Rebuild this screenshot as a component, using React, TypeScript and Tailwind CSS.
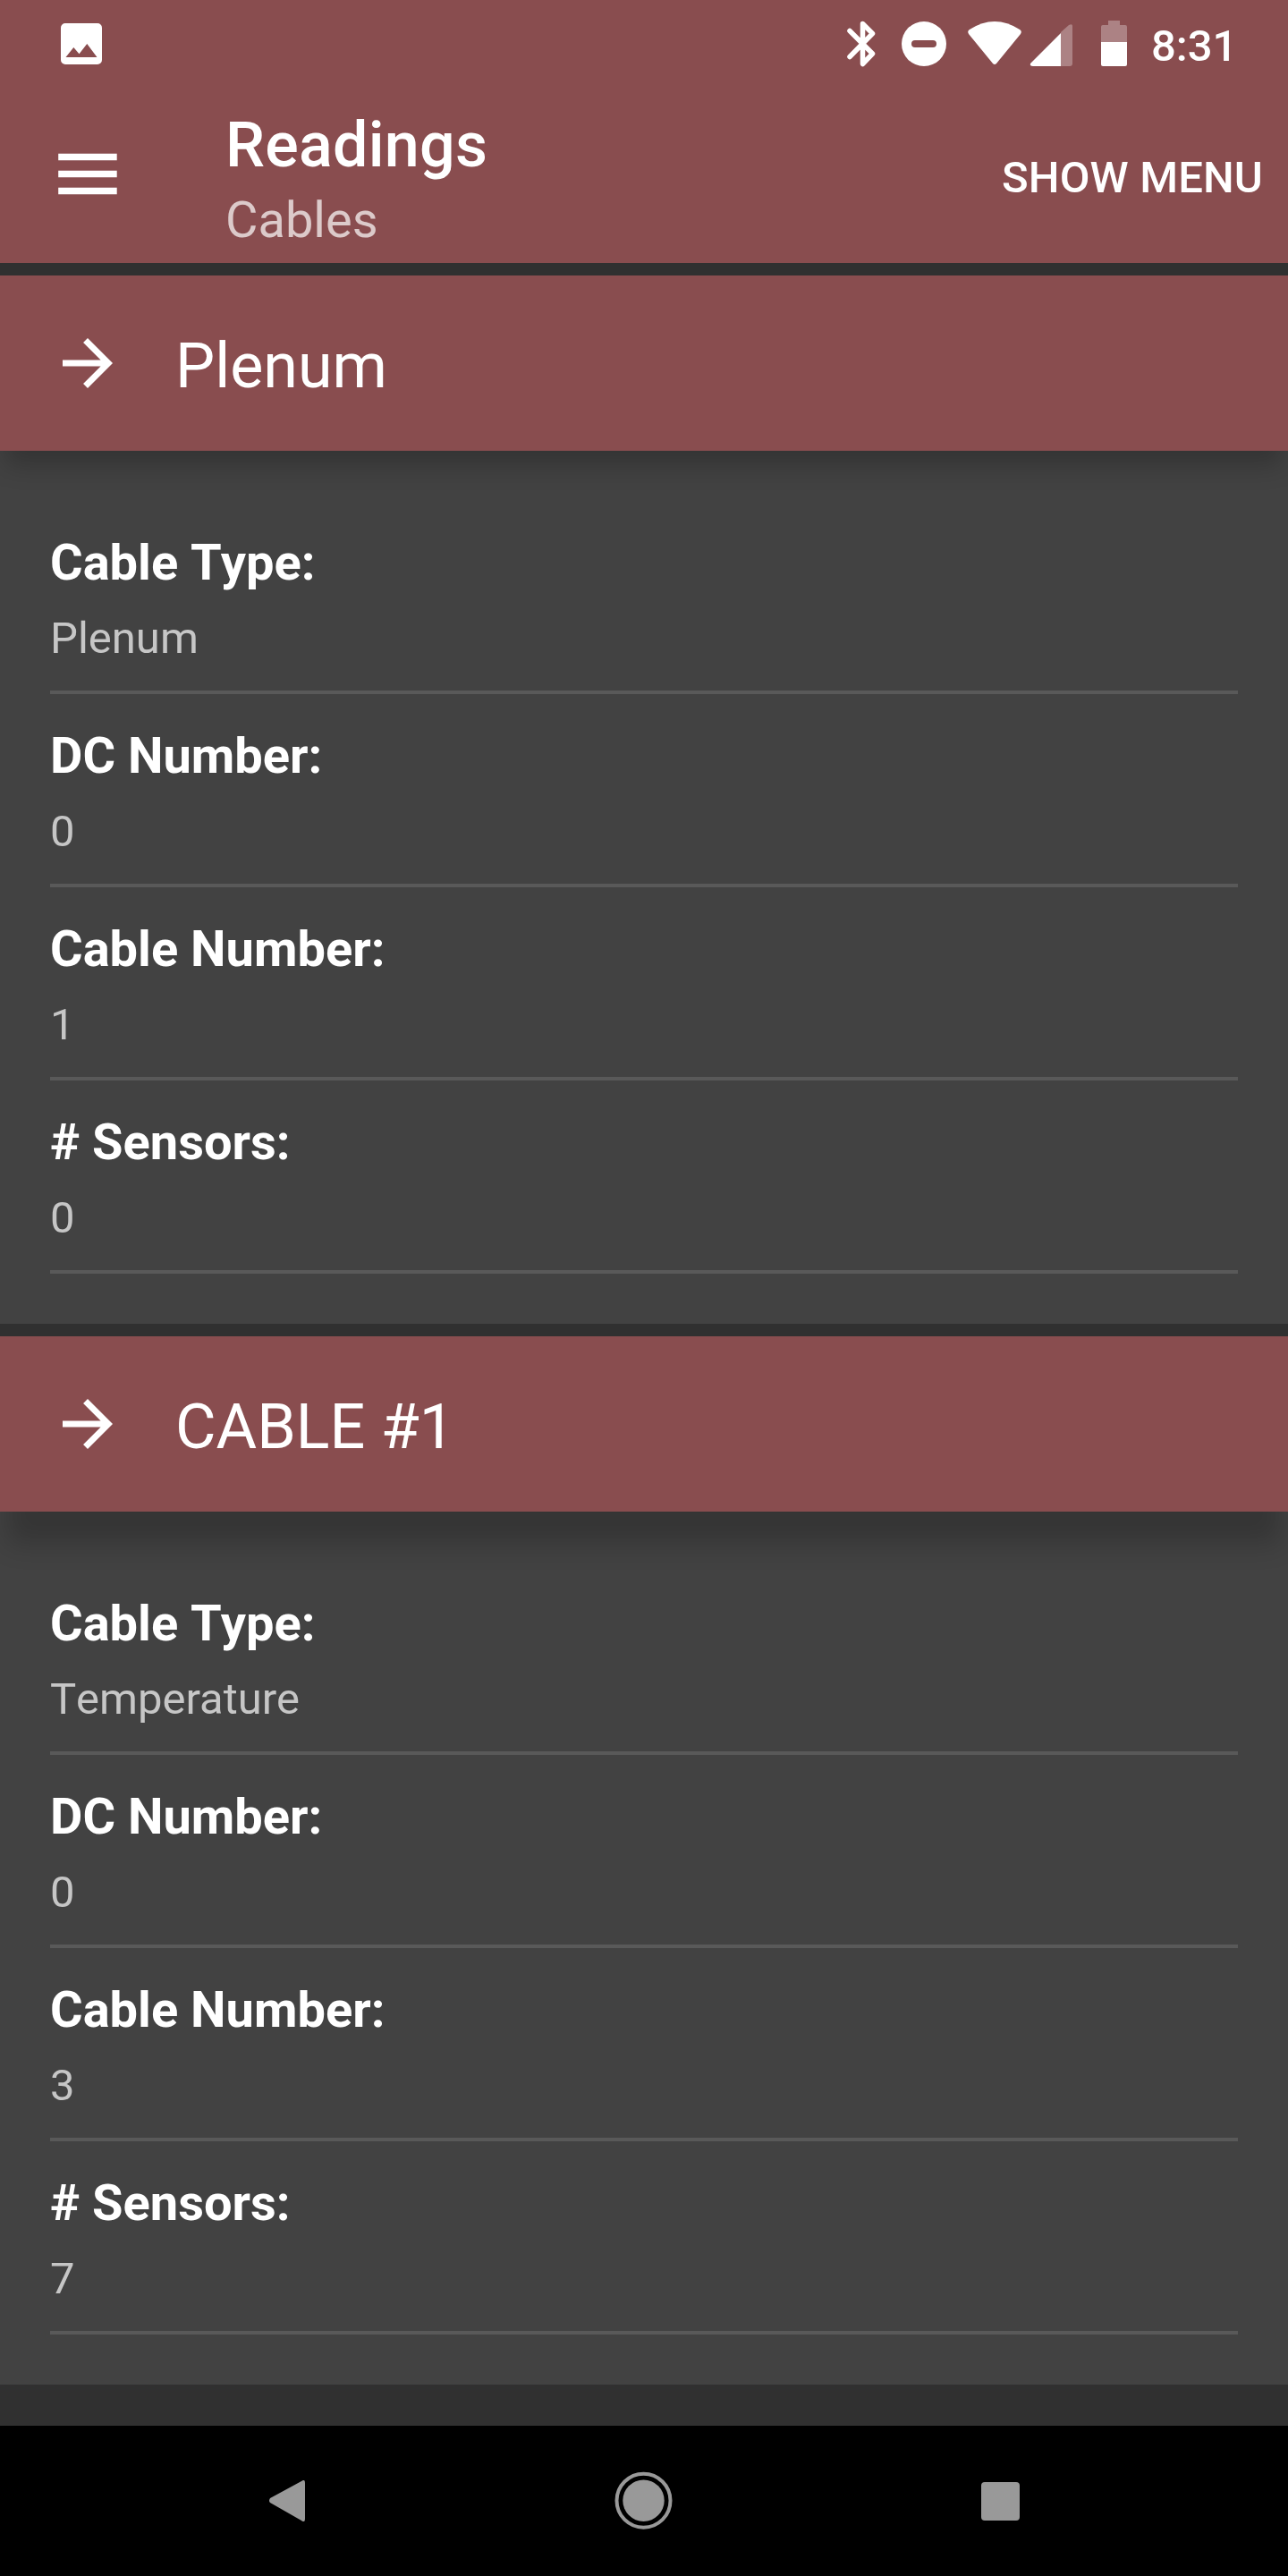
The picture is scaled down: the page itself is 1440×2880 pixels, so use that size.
import type { ReactNode } from 'react';

const fields: { key: string; label: ReactNode }[] = [
  { key: 'type', label: <>Cable <span className="tracking-[-1px]">T</span>ype:</> },
  { key: 'dc', label: 'DC Number:' },
  { key: 'number', label: 'Cable Number:' },
  { key: 'sensors', label: '# Sensors:' },
];

type Cable = { title: string; values: ReactNode[]; shadow: string };

const cables: Cable[] = [
  { title: 'Plenum', values: ['Plenum', '0', '1', '0'], shadow: 'shadow-[0_22px_26px_-6px_rgba(0,0,0,0.22)]' },
  {
    title: 'CABLE #1',
    values: [<><span className="tracking-[-0.300px]">T</span>emperature</>, '0', '3', '7'],
    shadow: 'shadow-[0_44px_28px_-8px_rgba(0,0,0,0.2)]',
  },
];

function StatusBar() {
  return (
    <div className="flex h-[84px] items-start text-white">
      <svg className="ml-[68px] mt-[26px] h-[46px] w-[46px] shrink-0" viewBox="0 0 46 46">
        <path fill="currentColor" fillRule="evenodd" d="M5 0h36a5 5 0 0 1 5 5v36a5 5 0 0 1-5 5H5a5 5 0 0 1-5-5V5a5 5 0 0 1 5-5zM5.500 38h35L29.300 23l-8.800 11.300L14.300 27z" />
      </svg>
      <svg className="ml-[816px] h-[84px] w-[350px] shrink-0" viewBox="930 0 350 84">
        <path d="M950 34.500 975.500 60 964.500 71.500V26.500L975.500 37.500 950 63.500" fill="none" stroke="white" strokeWidth="5.500" strokeLinecap="round" strokeLinejoin="round" />
        <circle cx="1033" cy="49" r="25" fill="white" />
        <rect x="1019" y="45" width="28" height="8" rx="4" fill="#894d4f" />
        <path d="M1084 33Q1112 15 1140 33Q1143 35 1141 38L1114 71Q1112 73 1110 71L1083 38Q1081 35 1084 33Z" fill="white" />
        <path d="M1186 36V74H1196Q1199 74 1199 71V29Q1199 26 1195 28Z" fill="white" fillOpacity=".3" />
        <path d="M1186 37V74H1155Q1151 74 1152 71Z" fill="white" />
        <path d="M1239 23h13v5h6q2 0 2 2v17h-29V30q0-2 2-2h6z" fill="white" fillOpacity=".3" />
        <path d="M1231 47h29v25q0 2-2 2h-25q-2 0-2-2z" fill="white" />
      </svg>
      <span className="ml-[7px] mt-[23px] text-[49px] font-medium leading-[58px]">8:31</span>
    </div>
  );
}

function AppBar() {
  return (
    <div className="flex h-[210px] items-start text-white">
      <svg className="ml-[65px] mt-[87px] h-[47px] w-[66px]" viewBox="0 0 66 47" fill="currentColor">
        <path d="M.2 .8h65.500v7.400H.2zM.2 19.800h65.500v7.400H.2zM.2 38.800h65.500v7.400H.2z" />
      </svg>
      <div className="ml-[121px] mt-[37px]">
        <div className="text-[70px] font-medium leading-[82px] tracking-[0.250px]">Readings</div>
        <div className="mt-[10px] text-[56px] leading-[66px] text-white/70">Cables</div>
      </div>
      <button className="ml-auto mr-[28px] mt-[86px] text-[49px] font-medium leading-[58px] tracking-[0.120px]">SHOW MENU</button>
    </div>
  );
}

function CableCard({ title, values, shadow }: Cable) {
  return (
    <section className="mt-[14px] overflow-hidden bg-[#424242]">
      <div className={`flex h-[196px] items-center bg-[#894d4f] text-white ${shadow}`}>
        <svg className="ml-[70px] h-[56px] w-[56px]" viewBox="4 4 16 16" fill="currentColor">
          <path d="M12 4l-1.410 1.410L16.170 11H4v2h12.170l-5.580 5.590L12 20l8-8z" />
        </svg>
        <h2 className="ml-[70px] mt-[5px] text-[70px] leading-[82px]">{title}</h2>
      </div>
      <dl className="mx-[56px] mb-[56px] mt-[56px]">
        {fields.map((field, i) => (
          <div key={field.key} className="h-[216px] border-b-4 border-[#595959] pt-[36px]">
            <dt className="text-[56px] font-bold leading-[66px] text-white">{field.label}</dt>
            <dd className="mt-[23px] text-[49px] leading-[58px] text-[#c6c6c6]">{values[i]}</dd>
          </div>
        ))}
      </dl>
    </section>
  );
}

export default function App() {
  return (
    <div className="flex h-[2880px] w-[1440px] flex-col overflow-hidden bg-[#303030] font-[Roboto,sans-serif]">
      <header className="bg-[#894d4f]">
        <StatusBar />
        <AppBar />
      </header>
      <main>
        {cables.map((cable) => (
          <CableCard key={cable.title} {...cable} />
        ))}
      </main>
      <nav className="mt-auto flex h-[168px] items-center bg-black text-[#999999]">
        <svg className="ml-[301px] h-[46px] w-[40px]" viewBox="301 61 40 46" fill="currentColor">
          <path d="M302 86Q300 84 302 81L337 62Q341 59 341 64V104Q341 109 337 106Z" />
        </svg>
        <svg className="-mt-px ml-[346px] h-[66px] w-[66px]" viewBox="-33 -33 66 66" fill="currentColor">
          <circle cx="-.5" cy="-.3" r="30" fill="none" stroke="currentColor" strokeWidth="4" />
          <circle cx="-.5" cy="-.3" r="23.200" />
        </svg>
        <div className="ml-[344px] h-[43px] w-[43px] rounded-[4px] bg-[#999999]" />
      </nav>
    </div>
  );
}
